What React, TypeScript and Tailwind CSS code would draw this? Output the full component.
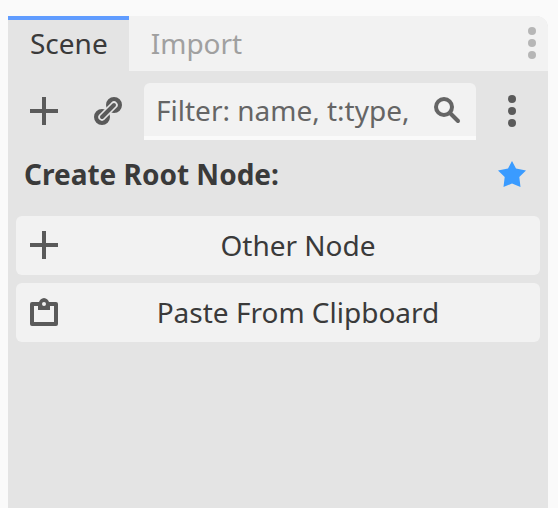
import type { ReactNode } from "react";

function Icon({ children }: { children: ReactNode }) {
  return (
    <svg viewBox="0 0 32 32" className="size-8 shrink-0" fill="none" aria-hidden="true">
      {children}
    </svg>
  );
}

function AddIcon() {
  return (
    <Icon>
      <path d="M14 2h4v12h12v4H18v12h-4V18H2v-4h12z" fill="currentColor" />
    </Icon>
  );
}

function LinkIcon() {
  return (
    <Icon>
      <g stroke="currentColor" strokeWidth="5">
        <circle cx="22" cy="10" r="5.5" />
        <circle cx="10" cy="22" r="5.5" />
      </g>
      <path d="M10 22 22 10" stroke="#e4e4e4" strokeWidth="7.4" strokeLinecap="round" />
      <path d="M10 22 22 10" stroke="currentColor" strokeWidth="4" strokeLinecap="round" />
    </Icon>
  );
}

function DotsIcon() {
  return (
    <Icon>
      <g fill="currentColor">
        <circle cx="16" cy="4" r="4" />
        <circle cx="16" cy="16" r="4" />
        <circle cx="16" cy="28" r="4" />
      </g>
    </Icon>
  );
}

function SearchIcon() {
  return (
    <Icon>
      <circle cx="12" cy="13" r="8" stroke="currentColor" strokeWidth="4" />
      <path d="m18 19 8 8" stroke="currentColor" strokeWidth="4" strokeLinecap="round" />
    </Icon>
  );
}

function StarIcon() {
  return (
    <Icon>
      <path
        d="M16 3 20 10.5 30 12.5 23.3 19 24.5 29 16 25.5 7.5 29 8.7 19 2 12.5 12 10.5z"
        fill="#3a9bff"
      />
    </Icon>
  );
}

function PasteIcon() {
  return (
    <Icon>
      <path
        fill="currentColor"
        fillRule="evenodd"
        d="M16 2a6 6 0 0 0-5 4H4a2 2 0 0 0-2 2v20a2 2 0 0 0 2 2h24a2 2 0 0 0 2-2V8a2 2 0 0 0-2-2h-7a6 6 0 0 0-5-4zm0 4a2 2 0 1 1 0 4 2 2 0 0 1 0-4zM6 10h4v4h12v-4h4v16H6z"
      />
    </Icon>
  );
}

const actions = [
  { label: "Other Node", icon: <AddIcon /> },
  { label: "Paste From Clipboard", icon: <PasteIcon /> },
];

export default function App() {
  return (
    <div className="flex min-h-screen bg-[#fafafa] pt-4 pr-2.5 pl-2 font-['Noto_Sans',sans-serif] text-[28px] leading-9 text-[#3a3a3a]">
      <section className="flex min-w-0 flex-1 flex-col rounded-tr-xl bg-[#e4e4e4]">
        <header className="flex h-[55px] items-stretch rounded-tr-xl bg-[#f2f2f2]">
          <div role="tablist" className="flex flex-1">
            <button
              role="tab"
              aria-selected="true"
              className="bg-[#e4e4e4] pr-[21px] pb-0.5 pl-[22px] shadow-[inset_0_4px_#609cff]"
            >
              Scene
            </button>
            <button role="tab" aria-selected="false" className="pr-[21px] pb-0.5 pl-[22px] text-[#a0a0a0]">
              Import
            </button>
          </div>
          <button aria-label="Dock options" className="pb-px text-[#b6b6b6]">
            <DotsIcon />
          </button>
        </header>

        <div className="flex items-start gap-2 px-2 pt-3 text-[#5a5a5a]">
          <button aria-label="Add node" className="h-14 px-3">
            <AddIcon />
          </button>
          <button aria-label="Instantiate scene" className="h-14 px-3">
            <LinkIcon />
          </button>
          <label className="flex h-[57px] min-w-0 flex-1 items-center gap-2 rounded-t-md border-b-4 border-[#fafafa] bg-[#f2f2f2] px-3 text-[#656565]">
            <input
              type="text"
              aria-label="Filter nodes"
              placeholder="Filter: name, t:type,"
              className="min-w-0 flex-1 outline-none placeholder:text-[#656565]"
            />
            <SearchIcon />
          </label>
          <button aria-label="Scene options" className="h-14 px-3">
            <DotsIcon />
          </button>
        </div>

        <div className="flex items-center justify-between px-4 pt-4 pb-6">
          <h2 className="font-bold">Create Root Node:</h2>
          <button aria-label="Toggle favorites" className="px-1">
            <StarIcon />
          </button>
        </div>

        <div className="flex flex-col gap-2 px-2">
          {actions.map((action) => (
            <button key={action.label} className="flex h-[59px] items-center rounded-md bg-[#f2f2f2] px-3 pb-px">
              <span className="text-[#5a5a5a]">{action.icon}</span>
              <span className="flex-1 pl-2">{action.label}</span>
            </button>
          ))}
        </div>
      </section>
    </div>
  );
}
